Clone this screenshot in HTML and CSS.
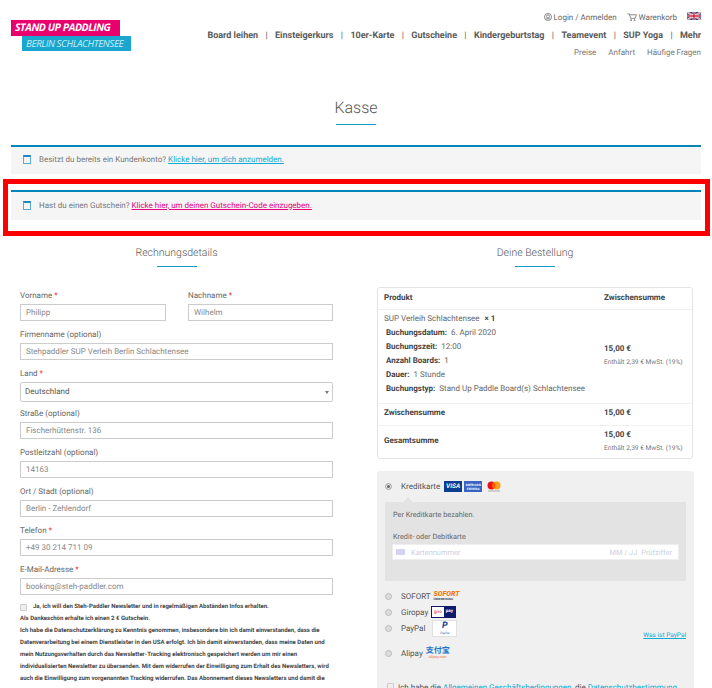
FILE: index.html
```html
<!DOCTYPE html>
<html lang="de">
<head>
    <meta charset="UTF-8">
    <meta name="viewport" content="width=device-width, initial-scale=1.0">
    <title>Kasse - Stand Up Paddling Berlin Schlachtensee</title>
    <link rel="stylesheet" href="styles.css">
</head>
<body>

<header class="site-header">
    <a href="#" class="logo">
        <span class="logo-top">STAND UP PADDLING</span>
        <span class="logo-bottom">BERLIN SCHLACHTENSEE</span>
    </a>
    <div class="header-right">
        <div class="top-links">
            <a href="#" class="top-link">
                <svg width="8" height="8" viewBox="0 0 18 18" fill="none" stroke="#555" stroke-width="1.5"><circle cx="9" cy="9" r="8"/><circle cx="9" cy="7.5" r="3.4"/><path d="M3.5 14.5c1.5-2.6 9.500-2.600 11 0"/></svg>
                Login / Anmelden
            </a>
            <a href="#" class="top-link">
                <svg width="10" height="8" viewBox="0 0 22 18" fill="none" stroke="#555" stroke-width="1.500"><path d="M1 2h4l3 10h10l3-8H6"/><circle cx="9" cy="16" r="1.300"/><circle cx="17" cy="16" r="1.300"/></svg>
                Warenkorb
            </a>
            <svg class="flag" width="14" height="8" viewBox="0 0 14 8"><rect width="14" height="8" fill="#2b3f86"/><path d="M0 0l14 8M14 0L0 8" stroke="#fff" stroke-width="1.600"/><path d="M0 0l14 8M14 0L0 8" stroke="#d0354a" stroke-width=".6"/><path d="M7 0v8M0 4h14" stroke="#fff" stroke-width="2.600"/><path d="M7 0v8M0 4h14" stroke="#d0243c" stroke-width="1.500"/></svg>
        </div>
        <nav class="main-nav">
            <a href="#">Board leihen</a><span>|</span>
            <a href="#">Einsteigerkurs</a><span>|</span>
            <a href="#">10er-Karte</a><span>|</span>
            <a href="#">Gutscheine</a><span>|</span>
            <a href="#">Kindergeburtstag</a><span>|</span>
            <a href="#">Teamevent</a><span>|</span>
            <a href="#">SUP Yoga</a><span>|</span>
            <a href="#">Mehr</a>
        </nav>
        <nav class="sub-nav">
            <a href="#">Preise</a>
            <a href="#">Anfahrt</a>
            <a href="#">Häufige Fragen</a>
        </nav>
    </div>
</header>

<main class="main-container">
    <h1 class="page-title">Kasse</h1>

    <div class="notice">
        <span class="notice-icon"></span>
        <span>Besitzt du bereits ein Kundenkonto? <a href="#" class="link-blue">Klicke hier, um dich anzumelden.</a></span>
    </div>

    <div class="highlight-box">
        <div class="notice notice-inner">
            <span class="notice-icon"></span>
            <span>Hast du einen Gutschein? <a href="#" class="link-pink">Klicke hier, um deinen Gutschein-Code einzugeben.</a></span>
        </div>
    </div>

    <div class="checkout">
        <section class="billing">
            <h2 class="section-title">Rechnungsdetails</h2>
            <form class="billing-form">
                <div class="form-row">
                    <div class="field">
                        <label>Vorname <em>*</em></label>
                        <input type="text" value="Philipp">
                    </div>
                    <div class="field">
                        <label>Nachname <em>*</em></label>
                        <input type="text" value="Wilhelm">
                    </div>
                </div>
                <div class="field">
                    <label>Firmenname (optional)</label>
                    <input type="text" value="Stehpaddler SUP Verleih Berlin Schlachtensee">
                </div>
                <div class="field field-select">
                    <label>Land <em>*</em></label>
                    <div class="select-box">Deutschland</div>
                </div>
                <div class="field">
                    <label>Straße (optional)</label>
                    <input type="text" value="Fischerhüttenstr. 136">
                </div>
                <div class="field">
                    <label>Postleitzahl (optional)</label>
                    <input type="text" value="14163">
                </div>
                <div class="field">
                    <label>Ort / Stadt (optional)</label>
                    <input type="text" value="Berlin - Zehlendorf">
                </div>
                <div class="field">
                    <label>Telefon <em>*</em></label>
                    <input type="text" value="+49 30 214 711 09">
                </div>
                <div class="field">
                    <label>E-Mail-Adresse <em>*</em></label>
                    <input type="text" value="booking@steh-paddler.com">
                </div>
                <div class="newsletter">
                    <p class="newsletter-first"><span class="checkbox"></span>Ja, ich will den Steh-Paddler Newsletter und in regelmäßigen Abständen Infos erhalten.</p>
                    <p>Als Dankeschön erhalte ich einen 2 € Gutschein.</p>
                    <p>Ich habe die Datenschutzerklärung zu Kenntnis genommen, insbesondere bin ich damit einverstanden, dass die Datenverarbeitung bei einem Dienstleister in den USA erfolgt. Ich bin damit einverstanden, dass meine Daten und mein Nutzungsverhalten durch das Newsletter-Tracking elektronisch gespeichert werden um mir einen individualisierten Newsletter zu übersenden. Mit dem widerrufen der Einwilligung zum Erhalt des Newsletters, wird auch die Einwilligung zum vorgenannten Tracking widerrufen. Das Abonnement dieses Newsletters und damit die</p>
                </div>
            </form>
        </section>

        <section class="order">
            <h2 class="section-title">Deine Bestellung</h2>
            <div class="order-table">
                <div class="order-row order-head">
                    <div>Produkt</div>
                    <div>Zwischensumme</div>
                </div>
                <div class="order-row order-item">
                    <div class="item-list">
                        <p class="item-name">SUP Verleih Schlachtensee <b>× 1</b></p>
                        <p class="item-meta"><b>Buchungsdatum:</b> 6. April 2020</p>
                        <p class="item-meta"><b>Buchungszeit:</b> 12:00</p>
                        <p class="item-meta"><b>Anzahl Boards:</b> 1</p>
                        <p class="item-meta"><b>Dauer:</b> 1 Stunde</p>
                        <p class="item-meta"><b>Buchungstyp:</b> Stand Up Paddle Board(s) Schlachtensee</p>
                    </div>
                    <div class="price-cell">
                        <b>15,00 €</b>
                        <small>Enthält 2,39 € MwSt. (19%)</small>
                    </div>
                </div>
                <div class="order-row order-sub">
                    <div><b>Zwischensumme</b></div>
                    <div><b>15,00 €</b></div>
                </div>
                <div class="order-row order-total">
                    <div><b>Gesamtsumme</b></div>
                    <div class="price-cell">
                        <b>15,00 €</b>
                        <small>Enthält 2,39 € MwSt. (19%)</small>
                    </div>
                </div>
            </div>

            <div class="payment">
                <div class="pay-option pay-card">
                    <span class="radio radio-on"></span>
                    <span>Kreditkarte</span>
                    <span class="badge badge-visa">VISA</span>
                    <span class="badge badge-amex">AMERICAN EXPRESS</span>
                    <svg class="badge-mc" width="14" height="11" viewBox="0 0 14 11"><circle cx="4.500" cy="4.500" r="4" fill="#e8141c"/><circle cx="9.500" cy="4.500" r="4" fill="#f79e1b"/><path d="M7 1.200a4 4 0 0 1 0 6.600a4 4 0 0 1 0-6.600z" fill="#ff5f00"/><path d="M1 10h12" stroke="#999" stroke-width=".8"/></svg>
                </div>
                <div class="card-box">
                    <p>Per Kreditkarte bezahlen.</p>
                    <p class="card-label">Kredit- oder Debitkarte</p>
                    <div class="card-input">
                        <span class="card-chip"></span>
                        <span class="card-number">Kartennummer</span>
                        <span>MM / JJ</span>
                        <span>Prüfziffer</span>
                    </div>
                </div>
                <div class="pay-option pay-sofort">
                    <span class="radio"></span>
                    <span>SOFORT</span>
                    <span class="badge-sofort">SOFORT<small>ÜBERWEISUNG</small></span>
                </div>
                <div class="pay-option pay-giro">
                    <span class="radio"></span>
                    <span>Giropay</span>
                    <span class="badge-giro"><i>giro</i><b>pay</b></span>
                </div>
                <div class="pay-option pay-paypal">
                    <span class="radio"></span>
                    <span>PayPal</span>
                    <span class="badge-paypal"><b>P</b><small>PayPal</small></span>
                    <a href="#" class="paypal-what link-blue">Was ist PayPal</a>
                </div>
                <div class="pay-option pay-alipay">
                    <span class="radio"></span>
                    <span>Alipay</span>
                    <span class="badge-alipay"><b>支付宝</b><small>Alipay.com</small></span>
                </div>
                <p class="terms"><span class="checkbox"></span>Ich habe die <a href="#" class="link-blue">Allgemeinen Geschäftsbedingungen</a>, die <a href="#" class="link-blue">Datenschutzbestimmung</a></p>
            </div>
        </section>
    </div>
</main>

</body>
</html>
```

FILE: styles.css
```css
/* ========= Farben ========= */
:root {
  --blue: #0e9cc4;
  --link-blue: #15a8d0;
  --pink: #e6007e;
  --text-color: #666;
  --border: #ccc;
}

/* ========= Global ========= */
html,
body {
  height: 688px;
  overflow: hidden;
}

body {
  font-family: Roboto, "Liberation Sans", sans-serif;
  font-size: 8px;
  color: var(--text-color);
  background-color: #fff;
  margin: 0;
  text-rendering: geometricPrecision;
}

a {
  text-decoration: none;
}

p {
  margin: 0;
}

.link-blue {
  color: var(--link-blue);
  text-decoration: underline;
}

.link-pink {
  color: var(--pink);
  text-decoration: underline;
}

/* ========= Header ========= */
.site-header {
  display: flex;
  justify-content: space-between;
  padding: 0 11px;
  height: 60px;
}

.logo {
  display: flex;
  flex-direction: column;
  margin-top: 20px;
  font-family: "Open Sans", sans-serif;
  font-style: italic;
  color: #fff;
}

.logo-top {
  width: 109px;
  height: 16px;
  line-height: 16px;
  background-color: #e8006f;
  font-size: 10.500px;
  font-weight: 700;
  letter-spacing: -.45px;
  text-indent: 4px;
  white-space: nowrap;
}

.logo-bottom {
  width: 109px;
  height: 15px;
  line-height: 15px;
  margin-left: 11px;
  background-color: #1aa6cf;
  font-size: 9.800px;
  letter-spacing: -.4px;
  text-indent: 4px;
  color: #c8edf7;
  white-space: nowrap;
}

.header-right {
  display: flex;
  flex-direction: column;
  align-items: flex-end;
  padding-top: 12px;
}

.top-links {
  display: flex;
  align-items: center;
  gap: 10px;
  height: 10px;
  font-size: 8px;
}

.top-link {
  display: flex;
  align-items: center;
  gap: 2px;
  color: #666;
}

.flag {
  margin-top: -3px;
}

.main-nav {
  display: flex;
  gap: 7.350px;
  margin-top: 9px;
  height: 11px;
  line-height: 11px;
  font-size: 9px;
  font-weight: 700;
  white-space: nowrap;
  color: #5a5a5a;
}

.main-nav a {
  color: #5a5a5a;
}

.main-nav span {
  font-weight: 400;
}

.sub-nav {
  display: flex;
  gap: 12px;
  margin-top: 6px;
  font-size: 8px;
}

.sub-nav a {
  color: #777;
}

/* ========= Titel ========= */
.page-title {
  position: relative;
  box-sizing: border-box;
  margin: 0;
  padding-top: 38px;
  height: 66px;
  font-size: 16px;
  line-height: 20px;
  font-weight: 300;
  text-align: center;
  color: #555;
}

.page-title::after,
.section-title::after {
  content: "";
  position: absolute;
  left: 50%;
  width: 40px;
  margin-left: -20px;
  bottom: 0;
  height: 1px;
  background-color: var(--blue);
}

.page-title::after {
  bottom: 1px;
}

/* ========= Hinweise ========= */
.main-container {
  padding: 0 11px;
}

.notice {
  display: flex;
  align-items: center;
  gap: 8px;
  box-sizing: border-box;
  height: 29px;
  margin-top: 19px;
  padding: 0 0 2px 12px;
  background-color: #f5f5f5;
  border-top: 2px solid #0085ba;
  font-size: 8px;
  color: #777;
}

.notice-icon {
  width: 6px;
  height: 6px;
  border: 1px solid #5aa9d6;
  border-top: 2px solid #1f88c4;
}

.highlight-box {
  box-sizing: border-box;
  margin: 5px -9px 0 -8px;
  padding: 6px 4px 0 3px;
  height: 57px;
  border: 5px solid #f00;
}

.notice-inner {
  margin-top: 0;
  height: 30px;
}

/* ========= Zwei Spalten ========= */
.checkout {
  display: grid;
  grid-template-columns: 331px 332px;
  gap: 27px;
}

.section-title {
  position: relative;
  margin: 11px 0 0;
  height: 20px;
  font-size: 10.500px;
  line-height: 12px;
  font-weight: 300;
  text-align: center;
  color: #555;
}

/* ========= Formular ========= */
.billing-form {
  display: flex;
  flex-direction: column;
  gap: 8px;
  padding: 0 9px;
  margin-top: 23px;
}

.form-row {
  display: flex;
  justify-content: space-between;
}

.form-row .field {
  width: 146px;
}

.form-row .field:last-child {
  width: 145px;
}

.field label {
  display: block;
  height: 14px;
  line-height: 11px;
  font-size: 8px;
  color: #666;
}

.field em {
  font-style: normal;
  color: #e22;
}

.field input {
  display: block;
  width: 100%;
  height: 17px;
  box-sizing: border-box;
  padding: 0 5px;
  border: 1px solid var(--border);
  border-radius: 0;
  outline: none;
  font-family: inherit;
  font-size: 8px;
  color: #888;
  text-rendering: geometricPrecision;
}

.field-select {
  margin-bottom: -2px;
}

.select-box {
  position: relative;
  height: 20px;
  box-sizing: border-box;
  padding-left: 4px;
  line-height: 17px;
  border: 1px solid var(--border);
  border-radius: 2px;
  font-size: 8px;
  color: #555;
}

.select-box::after {
  content: "";
  position: absolute;
  right: 3px;
  top: 8px;
  border: 2px solid transparent;
  border-top: 3px solid #777;
}

.newsletter {
  margin-top: -2px;
  font-size: 6px;
  line-height: 12px;
  font-weight: 700;
  color: #444;
}

.newsletter-first {
  display: flex;
  align-items: center;
}

.checkbox {
  display: inline-block;
  width: 5px;
  height: 5px;
  margin-right: 6px;
  border: 1px solid #ccc;
  background-color: #eee;
  border-radius: 1px;
}

/* ========= Bestellung ========= */
.order {
  padding: 0 8px;
}

.order .section-title {
  margin-left: -8px;
  margin-right: -8px;
}

.order-table {
  margin-top: 20px;
  border: 1px solid #e4e4e4;
  border-radius: 3px;
  font-size: 8px;
  color: #666;
}

.order-row {
  display: grid;
  grid-template-columns: 220px 1fr;
  align-items: center;
  box-sizing: border-box;
  padding-left: 6px;
  border-bottom: 1px solid #f0f0f0;
  color: #444;
}

.order-row:last-child {
  border-bottom: 0;
}

.order-head {
  height: 22px;
  padding-bottom: 2px;
  font-weight: 700;
}

.order-item {
  height: 94px;
  color: #666;
}

.item-list {
  align-self: start;
  padding-top: 2px;
}

.order-item b {
  color: #444;
}

.item-name {
  height: 14px;
  line-height: 14px;
}

.item-name b {
  margin-left: 3px;
}

.item-meta {
  height: 14px;
  line-height: 14px;
  padding-left: 2px;
}

.item-meta b {
  margin-right: 2px;
}

.price-cell {
  display: flex;
  flex-direction: column;
  gap: 5px;
}

.order-item .price-cell {
  margin-top: -3px;
}

.price-cell small {
  font-size: 6.600px;
  color: #777;
}

.order-sub {
  height: 22px;
  padding-bottom: 5px;
}

.order-total {
  height: 32px;
  padding-bottom: 3px;
}

/* ========= Zahlung ========= */
.payment {
  position: relative;
  margin-top: 12px;
  margin-right: -1px;
  height: 217px;
  padding: 0 8px;
  background-color: #f0f0f0;
  border-radius: 3px 3px 0 0;
  font-size: 8px;
  color: #555;
}

.pay-option {
  position: relative;
  display: flex;
  align-items: center;
  gap: 3px;
}

.radio {
  width: 5px;
  height: 5px;
  margin: 0 6px 0 0;
  border: 1px solid #bbb;
  border-radius: 50%;
  background-color: #ddd;
}

.radio-on {
  background-color: #666;
  box-shadow: inset 0 0 0 1px #eee;
}

.pay-card {
  height: 31px;
}

.badge {
  width: 18px;
  height: 11px;
  font-weight: 700;
  text-align: center;
  color: #fff;
}

.badge-visa {
  margin-left: 1px;
  background-color: #0b3d91;
  font-size: 6.500px;
  line-height: 11px;
  font-style: italic;
  color: #f5f5f5;
}

.badge-amex {
  margin-left: -1px;
  background-color: #3b63c4;
  font-size: 3px;
  line-height: 4px;
  padding-top: 1.500px;
  height: 9.500px;
}

.badge-mc {
  margin-left: 2px;
}

.card-box {
  position: relative;
  height: 79px;
  box-sizing: border-box;
  padding: 8px;
  background-color: #e3e3e3;
  color: #666;
  font-size: 7.300px;
}

.card-box::before {
  content: "";
  position: absolute;
  left: 18px;
  top: -5px;
  border: 5px solid transparent;
  border-top: 0;
  border-bottom-color: #e3e3e3;
}

.card-label {
  margin-top: 13px;
}

.card-input {
  display: flex;
  align-items: center;
  gap: 4px;
  height: 14px;
  margin-top: 4px;
  padding: 0 6px 0 3px;
  background-color: #fff;
  font-size: 7.400px;
  color: #ccd0e0;
  box-shadow: 0 0 0 1px #eee;
}

.card-chip {
  width: 9px;
  height: 6px;
  margin-right: 2px;
  background-color: #d5d3f5;
  border-radius: 1px;
}

.card-number {
  flex: 1;
}

.pay-sofort,
.pay-giro,
.pay-paypal {
  height: 16px;
}

.pay-sofort {
  margin-top: 7px;
}

.badge-sofort {
  display: flex;
  flex-direction: column;
  font-size: 7px;
  font-weight: 900;
  font-style: italic;
  line-height: 7px;
  color: #f07d12;
}

.badge-sofort small {
  font-size: 2.800px;
  line-height: 3px;
  font-style: normal;
  color: #555;
}

.badge-giro {
  display: flex;
  align-items: center;
  width: 23px;
  height: 10px;
  border: .5px solid #0f1a6c;
  background-color: #fff;
  font-size: 4.500px;
  line-height: 9px;
}

.badge-giro i {
  flex: 1;
  font-style: normal;
  color: #e3001b;
  text-align: center;
}

.badge-giro b {
  flex: 1;
  height: 100%;
  background-color: #0f1a6c;
  color: #fff;
  text-align: center;
}

.badge-paypal {
  display: flex;
  flex-direction: column;
  align-items: center;
  width: 23px;
  height: 15px;
  margin-left: 4px;
  border: 1px solid #e0e0e0;
  background-color: #fff;
  font-size: 4px;
  color: #1a4a9c;
}

.badge-paypal b {
  font-size: 9px;
  line-height: 10px;
  font-style: italic;
  color: #15418f;
}

.badge-paypal small {
  font-size: 3px;
  line-height: 4px;
}

.paypal-what {
  position: absolute;
  right: 0;
  top: 11px;
  font-size: 6.500px;
}

.pay-alipay {
  height: 20px;
  margin-top: 7px;
}

.badge-alipay {
  display: flex;
  flex-direction: column;
  align-items: center;
  line-height: 8px;
  font-family: "Noto Sans CJK SC", sans-serif;
  font-size: 8px;
  color: #1a74c9;
}

.badge-alipay small {
  font-size: 3.500px;
  line-height: 5px;
  color: #f0641e;
}

.terms {
  margin-top: 20px;
  padding-left: 2px;
  font-size: 8px;
  white-space: nowrap;
  color: #555;
}

.terms .checkbox {
  margin-right: 4px;
}
```
